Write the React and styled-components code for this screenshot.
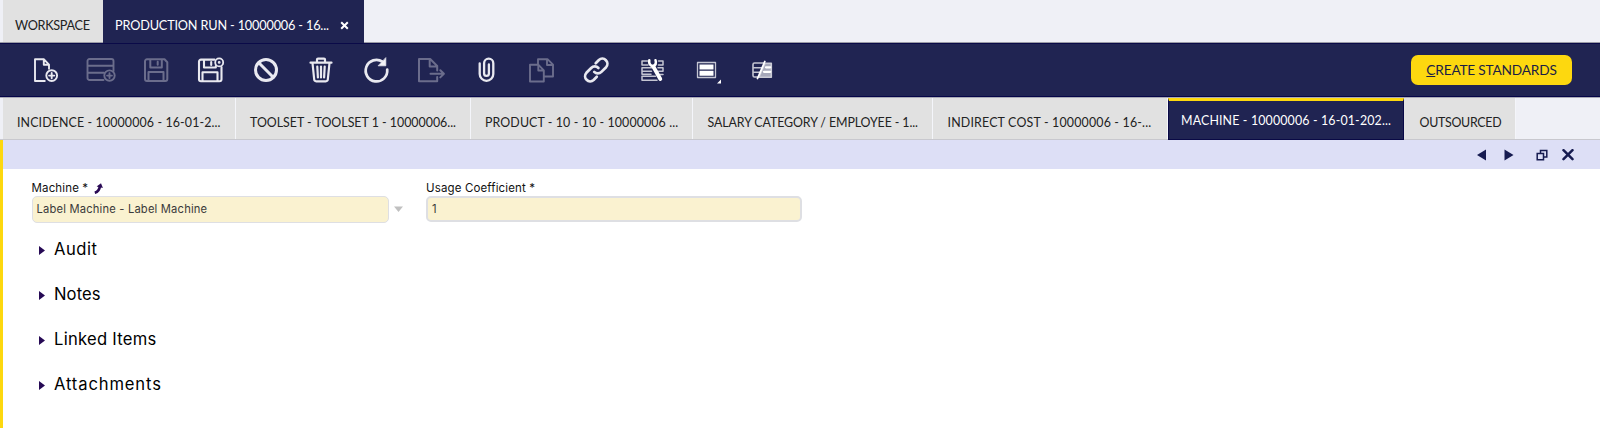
import React from "react";
import styled, { createGlobalStyle, css } from "styled-components";

const navy = "#202452";
const yellow = "#fdd80f";
const upper = `Lato, "Open Sans", sans-serif`;
const body = `Inter, "Open Sans", sans-serif`;

const GlobalStyle = createGlobalStyle`
  * { box-sizing: border-box; }
  body { margin: 0; background: #fff; font-family: ${body}; color: #000; }
`;

const Page = styled.div`
  display: flex;
  flex-direction: column;
  height: 428px;
  overflow: hidden;
`;

const WindowTabs = styled.nav`
  display: flex;
  height: 43px;
  padding-left: 3px;
  background: #eff0f6;
  border-bottom: 1px solid #9b9ca6;
`;

const WindowTab = styled.div`
  display: flex;
  align-items: center;
  flex: none;
  width: ${(p) => p.$width}px;
  height: ${(p) => (p.$active ? 43 : 42)}px;
  padding: 7px 0 0 12px;
  background: ${(p) => (p.$active ? navy : "#e1e1e1")};
  color: ${(p) => (p.$active ? "#fff" : "#222")};
  font: 400 12.7px/18px ${upper};
  letter-spacing: ${(p) => p.$tracking}px;
  white-space: nowrap;
`;

const TabClose = styled.svg`
  width: 9px;
  height: 9px;
  margin: 0 0 0 11px;
`;

const Toolbar = styled.header`
  display: flex;
  align-items: center;
  justify-content: space-between;
  flex: none;
  height: 54px;
  padding: 0 28px 0 31px;
  background: ${navy};
  border-top: 1px solid #0a0a48;
  border-bottom: 1px solid #050548;
`;

const Tools = styled.div`
  display: flex;
  gap: 25px;
`;

const ToolIcon = styled.svg`
  display: block;
  width: 30px;
  height: 30px;
  overflow: visible;
  fill: none;
  stroke: ${(p) => (p.$disabled ? "#6b6d8c" : "#e9e9f0")};
  stroke-width: ${(p) => p.$weight || 1.9};
  stroke-linejoin: round;
  stroke-linecap: round;
`;

const ActionButton = styled.button`
  width: 161px;
  height: 30px;
  margin-top: -1px;
  padding: 0;
  border: 0;
  border-radius: 7px;
  background: ${yellow};
  color: #1b1d45;
  font: 400 13.7px/30px ${upper};
  letter-spacing: -0.2px;
  white-space: nowrap;
`;

const RecordTabs = styled.nav`
  display: flex;
  flex: none;
  height: 43px;
  padding-left: 3px;
  background: #eff0f6;
  border-top: 1px solid #a9aab6;
  border-bottom: 1px solid #c8c8ce;
`;

const RecordTab = styled.div`
  flex: none;
  width: ${(p) => p.$width}px;
  height: 41px;
  padding: 16px 0 0 ${(p) => p.$pad}px;
  border-right: 1px solid #f4f5fa;
  background: #e1e1e1;
  color: #222;
  font: 400 12.4px/18px ${upper};
  letter-spacing: ${(p) => p.$tracking}px;
  white-space: nowrap;
  ${(p) =>
    p.$active &&
    css`
      height: 42px;
      padding-top: 11px;
      border: 1px solid #090945;
      border-top: 3px solid ${yellow};
      background: ${navy};
      color: #fff;
    `}
`;

const Panel = styled.main`
  flex: 1;
  border-left: 3px solid ${yellow};
`;

const PanelBar = styled.div`
  display: flex;
  justify-content: flex-end;
  height: 29px;
  padding: 9px 26px 0 0;
  background: #dddff6;
`;

const PanelIcon = styled.svg`
  width: 12px;
  height: 12px;
  margin-left: ${(p) => p.$gap}px;
  fill: #161b50;
`;

const Fields = styled.div`
  display: flex;
  padding: 11px 0 0 28.5px;
`;

const Field = styled.div`
  width: ${(p) => p.$width}px;
  margin-right: ${(p) => p.$after || 0}px;
`;

const Label = styled.label`
  display: flex;
  align-items: center;
  height: 16px;
  color: #111;
  font: 400 11.5px/16px ${body};
  letter-spacing: 0.14px;
`;

const LinkArrow = styled.svg`
  width: 9px;
  height: 11px;
  margin: 1px 0 0 6px;
`;

const InputRow = styled.div`
  display: flex;
  align-items: center;
`;

const Input = styled.div`
  width: ${(p) => p.$width}px;
  height: ${(p) => p.$height}px;
  padding-left: 4px;
  border: ${(p) => p.$border}px solid #dedfe3;
  border-radius: 5px;
  background: #faf2d0;
  color: #3a3a3a;
  font: 400 11.2px/${(p) => p.$height - 2 * p.$border}px ${body};
  letter-spacing: 0.18px;
`;

const Caret = styled.svg`
  width: 9px;
  height: 6px;
  margin: 0 0 2px 5px;
  fill: #c0c0c0;
`;

const Sections = styled.div`
  display: flex;
  flex-direction: column;
  padding: 3px 0 0 36px;
`;

const Section = styled.div`
  display: flex;
  align-items: center;
  height: 45px;
  font: 400 16.6px/24px ${body};
  letter-spacing: ${(p) => p.$tracking}px;
`;

const SectionArrow = styled.svg`
  width: 6px;
  height: 9px;
  margin: 3px 9px 0 0;
  fill: #260a55;
`;

const recordTabs = [
  { text: "INCIDENCE - 10000006 - 16-01-2...", width: 233, pad: 14, tracking: 0.127 },
  { text: "TOOLSET - TOOLSET 1 - 10000006...", width: 235, pad: 14, tracking: 0 },
  { text: "PRODUCT - 10 - 10 - 10000006 ...", width: 222, pad: 14, tracking: 0.107 },
  { text: "SALARY CATEGORY / EMPLOYEE - 1...", width: 240, pad: 14.5, tracking: -0.097 },
  { text: "INDIRECT COST - 10000006 - 16-...", width: 235, pad: 14.5, tracking: 0.185 },
  { text: "MACHINE - 10000006 - 16-01-202...", width: 236, pad: 12, tracking: 0.15, active: true },
  { text: "OUTSOURCED", width: 112, pad: 15.5, tracking: -0.27 },
];

const sections = [
  { text: "Audit", tracking: 0.5 },
  { text: "Notes", tracking: 0.1 },
  { text: "Linked Items", tracking: 0.26 },
  { text: "Attachments", tracking: 0.86 },
];

const Icon = ({ children, ...rest }) => (
  <ToolIcon viewBox="0 0 30 30" {...rest}>
    {children}
  </ToolIcon>
);

export default function App() {
  return (
    <Page>
      <GlobalStyle />
      <WindowTabs>
        <WindowTab $width={100} $tracking={-0.318}>WORKSPACE</WindowTab>
        <WindowTab $width={261} $tracking={-0.16} $active>
          PRODUCTION RUN - 10000006 - 16...
          <TabClose viewBox="0 0 9 9">
            <path d="M1.2 1.2 7.8 7.8M7.8 1.2 1.2 7.8" stroke="#fff" strokeWidth="2" />
          </TabClose>
        </WindowTab>
      </WindowTabs>

      <Toolbar>
        <Tools>
          <Icon>
            <path d="M13.8 26H4V4.3h9l5 5.4v4M12.8 4.5v5.3h5" />
            <circle cx="20.7" cy="20.6" r="5.4" />
            <path d="M20.7 18v5.2M18.1 20.6h5.2" />
          </Icon>
          <Icon $disabled>
            <path d="M17.5 25H3.5a2 2 0 0 1-2-2V6a2 2 0 0 1 2-2h22a2 2 0 0 1 2 2v10M1.5 10.8h26M1.5 17.8h16.5" />
            <circle cx="23.5" cy="20.6" r="5.2" />
            <path d="M23.5 18.2v4.8M21.1 20.6h4.8" />
          </Icon>
          <Icon $disabled $weight={2}>
            <path d="M6 4.3h17.5l2.8 3V24a2 2 0 0 1-2 2H6a2 2 0 0 1-2-2V6.3a2 2 0 0 1 2-2zM9.3 4.5v8h11.5v-8M16.7 6.8v3M7.5 26v-9h15v9" />
          </Icon>
          <Icon $weight={2.1}>
            <path d="M18.5 4.6H5a2 2 0 0 0-2 2V24.3a2 2 0 0 0 2 2h18.500a2 2 0 0 0 2-2V12M8 4.8v7.7h11.8v-1.5M15.2 7v3M6.5 26v-8.7h15V26" />
            <circle cx="23.2" cy="7.4" r="4" strokeWidth="1.8" />
            <circle cx="23.2" cy="7.4" r="0.8" strokeWidth="1.2" />
          </Icon>
          <Icon $weight={3}>
            <circle cx="15" cy="15" r="10.5" />
            <path d="M7.8 7.8 22.2 22.2" />
          </Icon>
          <Icon $weight={2.2}>
            <path d="M4.5 7.7h21M11 7.4V4.6q0-1 1-1h6q1 0 1 1v2.8M6.5 8l1.7 16.5a2 2 0 0 0 2 1.8h9.6a2 2 0 0 0 2-1.8L23.5 8M11.3 11.5l.6 11M15 11.5v11M18.7 11.5l-.6 11" />
          </Icon>
          <Icon $weight={2.7}>
            <path d="M26.2 14.5A10.8 10.8 0 1 1 21.5 6.700" />
            <path d="M24.8 3v7.800h-7.300z" fill="#f2f2f6" strokeWidth="0.8" />
          </Icon>
          <Icon $disabled $weight={2}>
            <path d="M21.2 15.500V11l-7-7H3v22.200h18.200V22M13.700 4.200v7.300h7.300M14.500 18.800h13M24.300 15.200l3.600 3.600-3.600 3.600" />
          </Icon>
          <Icon $weight={2.3}>
            <path d="M8.700 8.500V19a6.800 6.800 0 0 0 13.600 0V8.300a4.600 4.600 0 0 0-9.200 0V18.500a2.400 2.400 0 0 0 4.800 0V9.500" />
          </Icon>
          <Icon $disabled>
            <path d="M12 9.800V4.200h9.500l5.500 5.500V21.500H18M21 4.500V10h5.700M12.500 9.800H4V26.500h13.800V15.300zM12.300 10v5.500h5.300" />
          </Icon>
          <Icon $weight={2.7}>
            <path d="M13.200 16.900a5 5 0 0 0 7.200 0l4.700-4.700a5.100 5.100 0 0 0-7.200-7.200l-3.200 3.200M17.400 13a5 5 0 0 0-7.200 0L5.400 17.800a5.100 5.100 0 0 0 7.200 7.200l3.200-3.200" />
          </Icon>
          <Icon $weight={1.5}>
            <path
              d="M11.500 6H6v4h6M16 12.700H6v3.600h9.500M15 19.200H6v-3M19.500 21.300H6v3.900h15M22.500 6H27v4h-4.500M22 12.700h5v3.600h-4.500M24 19.500h3"
              stroke="#c4c5d2"
            />
            <path d="M17.300 11.500 24.300 24" stroke="#fff" strokeWidth="3.8" />
            <path d="M13.300 5.200Q12.500 10 17 11.300 21 9.800 19.500 5.200" stroke="#fff" strokeWidth="2.500" />
          </Icon>
          <Icon $weight={1.3}>
            <path d="M6.500 7.500h18v15h-18z" stroke="#c4c5d2" />
            <path d="M8.500 9.500h14v5h-14zM8.500 15.700h14v5h-14z" fill="#fff" stroke="none" />
            <path d="M30 24.500v4h-4z" fill="#fff" stroke="none" />
          </Icon>
          <Icon $weight={1.6}>
            <path d="M17.500 8H8.500Q7 8 7 9.500v11Q7 22 8.500 22H11.500M7 12.700h8.500M7 17.300h6.500" stroke="#c4c5d2" />
            <path d="M19 8.300h6.300v13.900H13z" fill="#a6a8ba" stroke="#c9cad5" />
            <path d="M20 12.300H24.200M18 16.800h6.200" stroke="#fff" strokeWidth="2.300" />
            <path d="M18.800 6.500 11.500 23.500" stroke="#fff" strokeWidth="1.800" />
          </Icon>
        </Tools>
        <ActionButton><u>C</u>REATE STANDARDS</ActionButton>
      </Toolbar>

      <RecordTabs>
        {recordTabs.map((t) => (
          <RecordTab key={t.text} $width={t.width} $pad={t.pad} $tracking={t.tracking} $active={t.active}>
            {t.text}
          </RecordTab>
        ))}
      </RecordTabs>

      <Panel>
        <PanelBar>
          <PanelIcon viewBox="0 0 12 12" $gap={0}><path d="M10 .5v11L1 6z" /></PanelIcon>
          <PanelIcon viewBox="0 0 12 12" $gap={15}><path d="M1.500 .5v11L10.500 6z" /></PanelIcon>
          <PanelIcon viewBox="0 0 12 12" $gap={21}>
            <path d="M4.500 4V1.500h6.300V8H8M1.200 4.500h6.300v6.200H1.200z" fill="none" stroke="#161b50" strokeWidth="1.500" />
          </PanelIcon>
          <PanelIcon viewBox="0 0 12 12" $gap={14}>
            <path d="m1.500 1.200 9 9m0-9-9 9" stroke="#161b50" strokeWidth="2.500" strokeLinecap="round" />
          </PanelIcon>
        </PanelBar>

        <Fields>
          <Field $width={372} $after={22.5}>
            <Label>
              Machine *
              <LinkArrow viewBox="0 0 9 11">
                <path d="M.8 9.800Q5.300 8.500 5.800 3.500" fill="none" stroke="#2a0a55" strokeWidth="2.600" />
                <path d="M2.600 3.500 7 .3l1.900 4.700z" fill="#2a0a55" />
              </LinkArrow>
            </Label>
            <InputRow>
              <Input $width={357} $height={27} $border={1}>Label Machine - Label Machine</Input>
              <Caret viewBox="0 0 9 6"><path d="M0 .5h9L4.500 6z" /></Caret>
            </InputRow>
          </Field>
          <Field $width={376}>
            <Label>Usage Coefficient *</Label>
            <Input $width={376} $height={26} $border={2}>1</Input>
          </Field>
        </Fields>

        <Sections>
          {sections.map((s) => (
            <Section key={s.text} $tracking={s.tracking}>
              <SectionArrow viewBox="0 0 6 9"><path d="M0 0 6 4.500 0 9z" /></SectionArrow>
              {s.text}
            </Section>
          ))}
        </Sections>
      </Panel>
    </Page>
  );
}
